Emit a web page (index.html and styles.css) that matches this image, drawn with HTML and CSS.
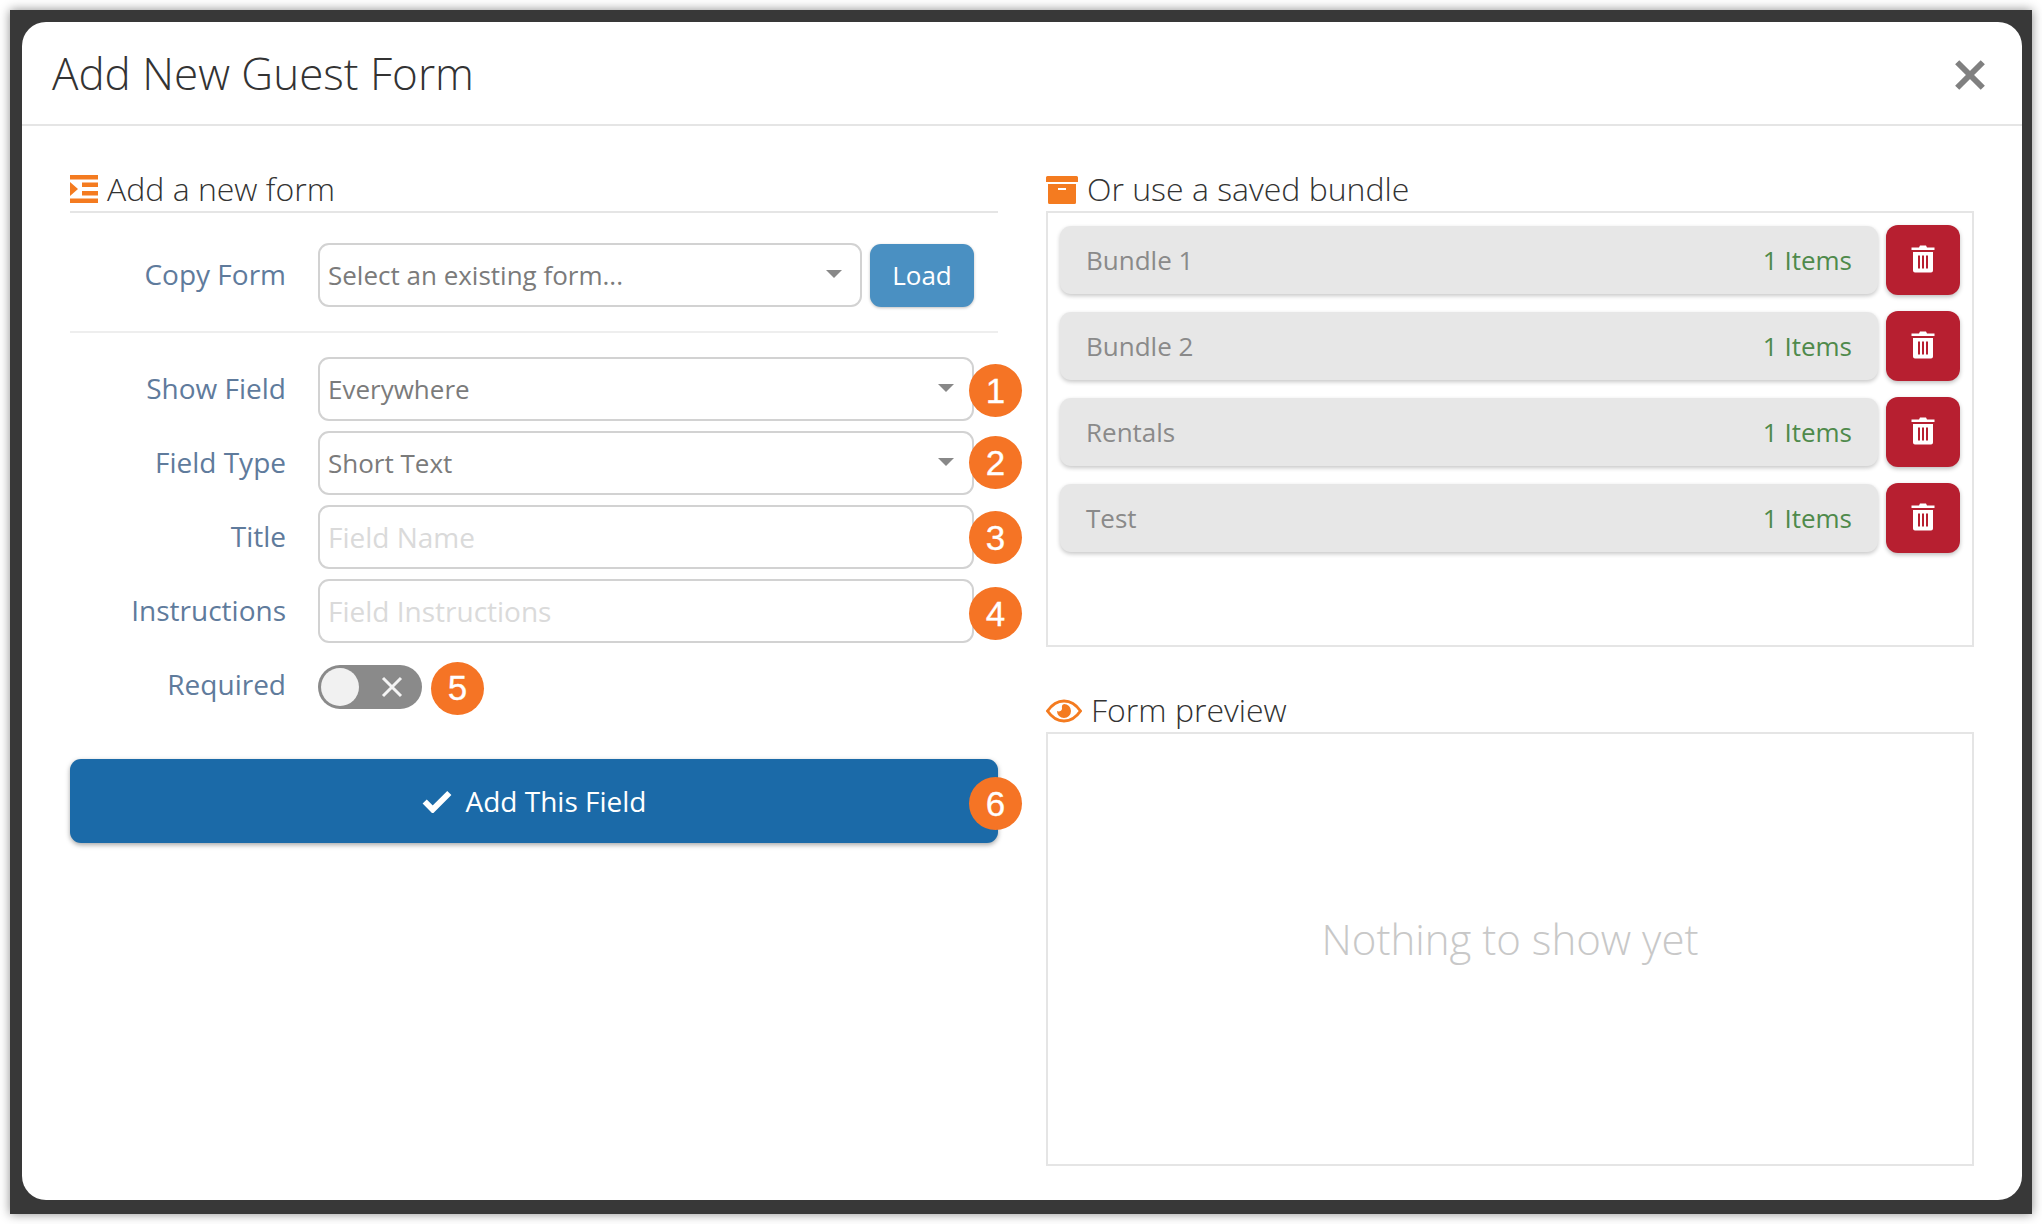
FILE: index.html
```html
<!DOCTYPE html>
<html lang="en">
<head>
<meta charset="utf-8">
<title>Add New Guest Form</title>
<link rel="stylesheet" href="styles.css">
</head>
<body>
<div class="frame">
  <div class="modal">
    <header class="modal-head">
      <h1 class="modal-title">Add New Guest Form</h1>
      <svg class="close" viewBox="0 0 30 30"><path d="M3 3 27 27M27 3 3 27"/></svg>
    </header>
    <main class="modal-body">
      <section class="col">
        <h2 class="head head-line">
          <svg class="ic-indent" viewBox="0 0 28 28"><path d="M0 0h28v4.500H0zM0 23.500h28V28H0zM12 7.500h16v4.500H12zM12 16h16v4.500H12zM0 7l8 7-8 7z"/></svg>
          <span class="head-text">Add a new form</span>
        </h2>
        <div class="row row-copy">
          <label class="label">Copy Form</label>
          <div class="select select-copy"><span>Select an existing form...</span><i class="caret"></i></div>
          <button class="load">Load</button>
        </div>
        <hr class="divider">
        <div class="fields">
          <div class="row">
            <label class="label">Show Field</label>
            <div class="select"><span>Everywhere</span><i class="caret"></i></div>
            <span class="badge b1">1</span>
          </div>
          <div class="row">
            <label class="label">Field Type</label>
            <div class="select"><span>Short Text</span><i class="caret"></i></div>
            <span class="badge b2">2</span>
          </div>
          <div class="row">
            <label class="label">Title</label>
            <input class="input" placeholder="Field Name">
            <span class="badge b3">3</span>
          </div>
          <div class="row">
            <label class="label">Instructions</label>
            <input class="input" placeholder="Field Instructions">
            <span class="badge b4">4</span>
          </div>
        </div>
        <div class="row row-toggle">
          <label class="label label-toggle">Required</label>
          <div class="toggle">
            <i class="knob"></i>
            <svg class="toggle-x" viewBox="0 0 22 22"><path d="M2 2 20 20M20 2 2 20"/></svg>
          </div>
          <span class="badge b5">5</span>
        </div>
        <div class="add-wrap">
          <button class="add">
            <svg class="check" viewBox="0 0 28 22"><path d="M2.500 11.500 10 19 25.500 3.500"/></svg>
            Add This Field
          </button>
          <span class="badge b6">6</span>
        </div>
      </section>
      <section class="col">
        <h2 class="head">
          <svg class="ic-archive" viewBox="0 0 32 28"><path d="M1.500 0h29A1.500 1.500 0 0 1 32 1.500V6H0V1.500A1.500 1.500 0 0 1 1.500 0zM2 8h28v18.500a1.500 1.500 0 0 1-1.500 1.500h-25A1.500 1.500 0 0 1 2 26.500zM12 12v2h8v-2z" fill-rule="evenodd"/></svg>
          <span class="head-text">Or use a saved bundle</span>
        </h2>
        <div class="box box-bundles">
          <div class="bundle">
            <div class="bundle-bar"><span>Bundle 1</span><span class="items">1 Items</span></div>
            <button class="del"><svg viewBox="0 0 24 28"><path class="trash" d="M8 2.500 9 .5h6l1 2h7.500v2.500H.5V2.500zM2 7h20v18.500a2 2 0 0 1-2 2H4a2 2 0 0 1-2-2zM7 10.500v13h2v-13zM11 10.500v13h2v-13zM15 10.500v13h2v-13z" fill-rule="evenodd"/></svg></button>
          </div>
          <div class="bundle">
            <div class="bundle-bar"><span>Bundle 2</span><span class="items">1 Items</span></div>
            <button class="del"><svg viewBox="0 0 24 28"><path class="trash" d="M8 2.500 9 .5h6l1 2h7.500v2.500H.5V2.500zM2 7h20v18.500a2 2 0 0 1-2 2H4a2 2 0 0 1-2-2zM7 10.500v13h2v-13zM11 10.500v13h2v-13zM15 10.500v13h2v-13z" fill-rule="evenodd"/></svg></button>
          </div>
          <div class="bundle">
            <div class="bundle-bar"><span>Rentals</span><span class="items">1 Items</span></div>
            <button class="del"><svg viewBox="0 0 24 28"><path class="trash" d="M8 2.500 9 .5h6l1 2h7.500v2.500H.5V2.500zM2 7h20v18.500a2 2 0 0 1-2 2H4a2 2 0 0 1-2-2zM7 10.500v13h2v-13zM11 10.500v13h2v-13zM15 10.500v13h2v-13z" fill-rule="evenodd"/></svg></button>
          </div>
          <div class="bundle">
            <div class="bundle-bar"><span>Test</span><span class="items">1 Items</span></div>
            <button class="del"><svg viewBox="0 0 24 28"><path class="trash" d="M8 2.500 9 .5h6l1 2h7.500v2.500H.5V2.500zM2 7h20v18.500a2 2 0 0 1-2 2H4a2 2 0 0 1-2-2zM7 10.500v13h2v-13zM11 10.500v13h2v-13zM15 10.500v13h2v-13z" fill-rule="evenodd"/></svg></button>
          </div>
        </div>
        <h2 class="head head-preview">
          <svg class="ic-eye" viewBox="0 0 36 24"><path class="eye-o" d="M1.500 12C6 5.500 11.500 2 18 2s12 3.500 16.500 10C30 18.500 24.500 22 18 22S6 18.500 1.500 12z"/><path class="eye-p" d="M18 5a7 7 0 1 1-7 7c2 1 5 0 5-2.500 0-2-.5-3.500 2-4.500z"/></svg>
          <span class="head-text">Form preview</span>
        </h2>
        <div class="box box-preview">Nothing to show yet</div>
      </section>
    </main>
  </div>
</div>
</body>
</html>
```
FILE: styles.css
```css
* { box-sizing: border-box; }
html, body { margin: 0; padding: 0; background: #fff; }
body { font-family: "Open Sans", "Liberation Sans", sans-serif; width: 2042px; height: 1224px; overflow: hidden; }

.frame {
  margin: 10px;
  width: 2022px;
  height: 1204px;
  padding: 12px 10px 14px 12px;
  background: #383838;
  box-shadow: 0 0 10px rgba(0, 0, 0, .45);
}
.modal { height: 100%; background: #fff; border-radius: 24px; display: flex; flex-direction: column; }
.modal-head {
  height: 104px;
  flex: none;
  border-bottom: 2px solid #e5e5e5;
  padding: 0 36px 0 30px;
  display: flex;
  align-items: center;
  justify-content: space-between;
}
.modal-title { margin: 0; font-size: 44px; font-weight: 300; color: #333; line-height: 1; }
.close { width: 32px; height: 32px; fill: none; stroke: #808080; stroke-width: 5.500; position: relative; top: 2px; }

.modal-body { flex: 1; padding: 48px 48px 0; display: grid; grid-template-columns: 928px 928px; column-gap: 48px; align-content: start; }
.col { display: flex; flex-direction: column; position: relative; }

.head { margin: 0; height: 37px; display: flex; align-items: center; font-size: 32px; font-weight: 300; color: #333; line-height: 1; }
.head-line { height: 39px; border-bottom: 2px solid #e5e5e5; }
.head-text { position: relative; top: -4px; }
.ic-indent { width: 28px; height: 28px; margin-right: 9px; fill: #f47b20; align-self: flex-start; margin-top: 1px; }
.ic-archive { width: 32px; height: 28px; margin-right: 9px; fill: #f47b20; position: relative; top: -3px; }
.ic-eye { width: 36px; height: 24px; margin-right: 9px; position: relative; top: -3px; }
.eye-o { fill: none; stroke: #f47b20; stroke-width: 3; }
.eye-p { fill: #f47b20; }

.row { display: flex; align-items: center; position: relative; height: 64px; }
.row-copy { margin-top: 30px; }
.label { width: 248px; flex: none; padding-right: 32px; text-align: right; font-size: 28px; color: #5f7b9c; position: relative; top: -1px; }
.label-toggle { top: -3px; }

.select, .input {
  width: 656px;
  height: 64px;
  border: 2px solid #d2d2d2;
  border-radius: 11px;
  background: #fff;
  padding: 0 8px;
  font: 26px "Open Sans", "Liberation Sans", sans-serif;
  color: #7b7b7b;
  outline: none;
}
.select { display: flex; align-items: center; justify-content: space-between; padding-right: 18px; }
.select-copy { width: 544px; }
.input { font-size: 28px; }
.input::placeholder { color: #dadada; opacity: 1; }
.caret { width: 0; height: 0; border-left: 8px solid transparent; border-right: 8px solid transparent; border-top: 8px solid #888; position: relative; top: -1px; }

.load {
  margin-left: 8px;
  width: 104px;
  height: 63px;
  border: 0;
  border-radius: 11px;
  background: #4a90c2;
  color: #fff;
  font: 400 26px "Open Sans", sans-serif;
  box-shadow: 0 1px 3px rgba(0, 0, 0, .25);
}

.divider { margin: 24px 0 0; width: 100%; border: 0; border-top: 2px solid #eee; }
.fields { margin-top: 24px; display: flex; flex-direction: column; gap: 10px; }

.badge {
  width: 53px;
  height: 53px;
  border-radius: 50%;
  background: #f57425;
  color: #fff;
  font: 35px "Liberation Sans", Arial, sans-serif;
  -webkit-text-stroke: .3px #fff;
  display: flex;
  align-items: center;
  justify-content: center;
  flex: none;
}
.b1, .b2, .b3, .b4, .b6 { position: absolute; right: -24px; }
.b1 { top: 7px; }
.b2 { top: 5px; }
.b3 { top: 6px; }
.b4 { top: 8px; }
.b5 { margin: 2px 0 0 9px; }
.b6 { top: 18px; }

.row-toggle { margin-top: 22px; height: 44px; }
.toggle { position: relative; width: 104px; height: 44px; border-radius: 22px; background: #8a8a8a; flex: none; }
.knob { position: absolute; left: 3px; top: 3px; width: 38px; height: 38px; border-radius: 50%; background: #f1f1f1; }
.toggle-x { position: absolute; left: 63px; top: 11px; width: 22px; height: 22px; fill: none; stroke: #f4f4f4; stroke-width: 3; }

.add-wrap { margin-top: 50px; position: relative; }
.add {
  width: 100%;
  height: 84px;
  border: 0;
  border-radius: 11px;
  background: #1b6aa8;
  color: #fff;
  font: 500 28px "Open Sans", sans-serif;
  box-shadow: 0 2px 5px rgba(0, 0, 0, .35);
  display: flex;
  align-items: center;
  justify-content: center;
}
.check { width: 30px; height: 24px; margin-right: 14px; fill: none; stroke: #fff; stroke-width: 5.500; }

.box { border: 2px solid #e5e5e5; }
.box-bundles { height: 436px; padding: 12px 12px; display: flex; flex-direction: column; gap: 16px; }
.head-preview { margin-top: 48px; }
.box-preview {
  height: 434px;
  padding-bottom: 22px;
  display: flex;
  align-items: center;
  justify-content: center;
  font-size: 42px;
  font-weight: 300;
  color: #c8c8c8;
}
.bundle { display: flex; gap: 8px; height: 70px; flex: none; }
.bundle-bar {
  flex: 1;
  margin: 1px 0;
  border-radius: 11px;
  background: #e7e7e7;
  box-shadow: 0 2px 4px rgba(0, 0, 0, .22);
  padding: 0 26px 0 26px;
  display: flex;
  align-items: center;
  justify-content: space-between;
  font-size: 26px;
  color: #8a8a8a;
}
.items { color: #4f8a4b; }
.del {
  width: 74px;
  flex: none;
  padding: 0;
  border: 0;
  border-radius: 12px;
  background: #b71f30;
  box-shadow: 0 2px 4px rgba(0, 0, 0, .25);
  display: flex;
  align-items: center;
  justify-content: center;
}
.del svg { width: 24px; height: 28px; position: relative; top: -1px; }
.trash { fill: #fff; }
```
